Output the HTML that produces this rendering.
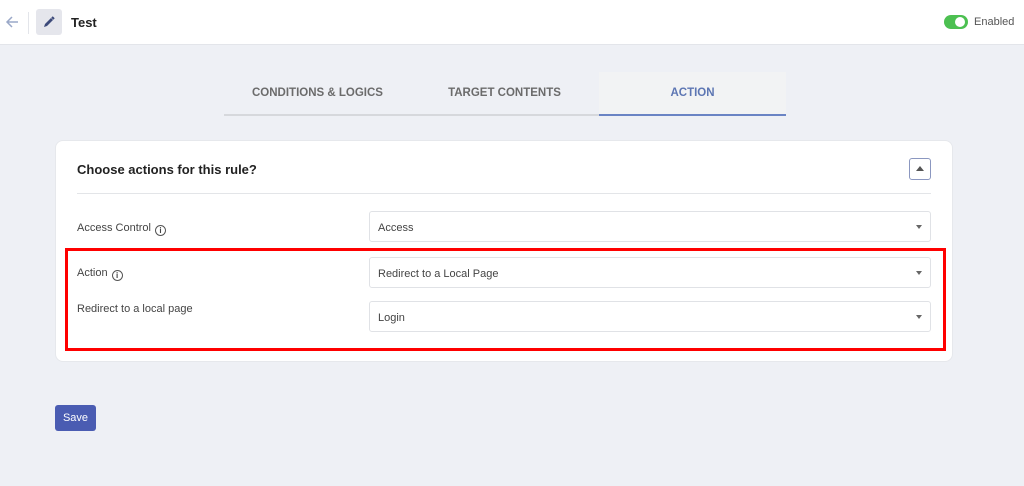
<!DOCTYPE html>
<html><head><style>
*{box-sizing:border-box;margin:0;padding:0}
body{width:1024px;height:486px;background:#eef0f5;font-family:"Liberation Sans",sans-serif;position:relative;overflow:hidden;color:#333}
.top{position:absolute;left:0;top:0;width:1024px;height:45px;background:#fff;border-bottom:1px solid #e3e5ea}
.abs{position:absolute}
.tab{position:absolute;top:72px;height:43px;line-height:42px;text-align:center;font-size:11.5px;font-weight:bold;color:#6b6b6b}
.card{position:absolute;left:55px;top:140px;width:898px;height:222px;background:#fff;border-radius:8px;border:1px solid #e6e8ec}
.sel{position:absolute;left:369px;width:562px;height:31px;border:1px solid #e0e2e6;border-radius:3px;background:#fff;font-size:11px;color:#444;padding-left:8px;display:flex;align-items:center;padding-top:2px}
.sel:after{content:"";position:absolute;right:8px;top:13px;border-left:3px solid transparent;border-right:3px solid transparent;border-top:4px solid #666}
.lbl{position:absolute;left:77px;font-size:11px;color:#444}
.info{display:inline-block;width:11px;height:11px;border:1px solid #555;border-radius:50%;font-size:8px;line-height:9px;text-align:center;vertical-align:-2px;margin-left:4px;font-weight:bold}
</style></head><body>
<div class="top">
<svg class="abs" style="left:4px;top:14px" width="16" height="16" viewBox="0 0 16 16"><path d="M14 8H3M8 3L3 8l5 5" stroke="#9aa8c8" stroke-width="1.5" fill="none"/></svg>
<div class="abs" style="left:28px;top:12px;width:1px;height:22px;background:#e3e5ea"></div>
<div class="abs" style="left:36px;top:9px;width:26px;height:26px;background:#e5e6ec;border-radius:3px"></div>
<svg class="abs" style="left:42px;top:15px" width="14" height="14" viewBox="0 0 14 14"><path d="M2 12l1-3 6-6 2 2-6 6z" fill="#3d4a7a"/><path d="M10 2l2 2" stroke="#3d4a7a" stroke-width="2"/></svg>
<div class="abs" style="left:71px;top:15px;font-size:13px;font-weight:bold;color:#222">Test</div>
<div class="abs" style="left:944px;top:15px;width:24px;height:14px;border-radius:7px;background:#4cc051"></div>
<div class="abs" style="left:955px;top:17px;width:10px;height:10px;border-radius:50%;background:#fff"></div>
<div class="abs" style="left:974px;top:16px;font-size:11px;color:#555">Enabled</div>
</div>
<div class="abs" style="left:224px;top:114px;width:562px;height:2px;background:#d6d8dc"></div>
<div class="abs" style="left:599px;top:72px;width:187px;height:42px;background:#f2f3f4"></div>
<div class="abs" style="left:599px;top:114px;width:187px;height:2px;background:#6a84c4"></div>
<div class="tab" style="left:224px;width:187px">CONDITIONS &amp; LOGICS</div>
<div class="tab" style="left:411px;width:187px">TARGET CONTENTS</div>
<div class="tab" style="left:599px;width:187px;color:#5d76b3">ACTION</div>
<div class="card"></div>
<div class="abs" style="left:77px;top:162px;font-size:13px;font-weight:bold;color:#222">Choose actions for this rule?</div>
<div class="abs" style="left:909px;top:158px;width:22px;height:22px;border:1px solid #8b97c0;border-radius:3px"></div>
<div class="abs" style="left:916px;top:166px;border-left:4px solid transparent;border-right:4px solid transparent;border-bottom:5px solid #555"></div>
<div class="abs" style="left:77px;top:193px;width:854px;height:1px;background:#e3e5e8"></div>
<div class="lbl" style="top:222px">Access Control<span class="info">i</span></div>
<div class="sel" style="top:211px">Access</div>
<div class="lbl" style="top:267px">Action<span class="info">i</span></div>
<div class="sel" style="top:257px">Redirect to a Local Page</div>
<div class="lbl" style="top:303px">Redirect to a local page</div>
<div class="sel" style="top:301px">Login</div>
<div class="abs" style="left:65px;top:248px;width:881px;height:103px;border:3px solid #f00"></div>
<div class="abs" style="left:55px;top:405px;width:41px;height:26px;background:#4a5cb2;border-radius:3px;color:#fff;font-size:11px;text-align:center;line-height:27px">Save</div>
</body></html>
